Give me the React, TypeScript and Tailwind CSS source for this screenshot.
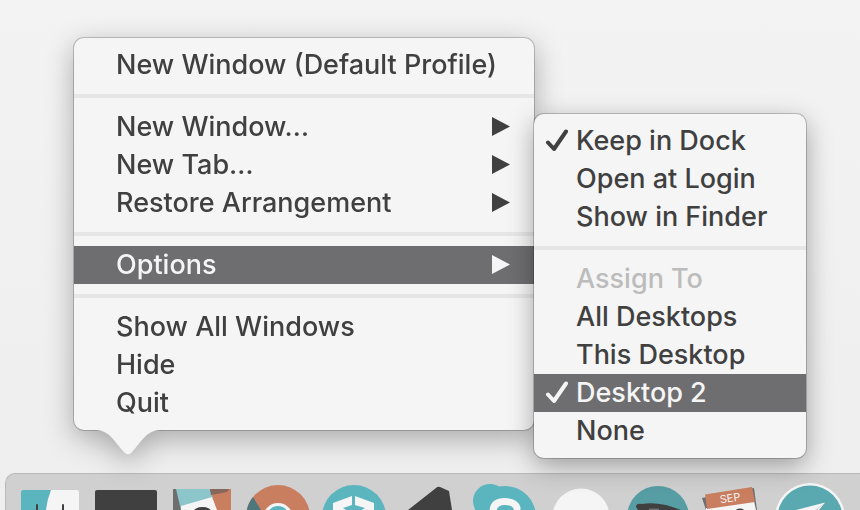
import type { ReactNode } from "react";

type Item = {
  label: string;
  submenu?: boolean;
  checked?: boolean;
  selected?: boolean;
  heading?: boolean;
};

const dockMenu: Item[][] = [
  [{ label: "New Window (Default Profile)" }],
  [
    { label: "New Window…", submenu: true },
    { label: "New Tab…", submenu: true },
    { label: "Restore Arrangement", submenu: true },
  ],
  [{ label: "Options", submenu: true, selected: true }],
  [{ label: "Show All Windows" }, { label: "Hide" }, { label: "Quit" }],
];

const optionsMenu: Item[][] = [
  [
    { label: "Keep in Dock", checked: true },
    { label: "Open at Login" },
    { label: "Show in Finder" },
  ],
  [
    { label: "Assign To", heading: true },
    { label: "All Desktops" },
    { label: "This Desktop" },
    { label: "Desktop 2", checked: true, selected: true },
    { label: "None" },
  ],
];

function Check() {
  return (
    <svg viewBox="0 0 24 24" className="h-6 w-6" fill="none" stroke="currentColor" strokeWidth="4" aria-hidden="true">
      <path d="M4 13.500 L10 20 L22 2.500" strokeLinecap="round" strokeLinejoin="round" />
    </svg>
  );
}

function Arrow() {
  return (
    <svg viewBox="0 0 18 20" className="h-5 w-[18px]" fill="currentColor" aria-hidden="true">
      <path d="M0 0 L18 9.500 L0 19 Z" />
    </svg>
  );
}

function MenuItem({ item }: { item: Item }) {
  const tone = item.selected
    ? "bg-[#6e6e70] text-[#f5f5f5]"
    : item.heading
      ? "text-[#bcbcbc]"
      : "text-[#404040]";
  return (
    <button
      type="button"
      role={item.checked ? "menuitemcheckbox" : "menuitem"}
      aria-checked={item.checked}
      aria-haspopup={item.submenu ? "menu" : undefined}
      disabled={item.heading}
      className={`flex h-[38px] w-full items-center whitespace-nowrap pr-6 text-left ${tone}`}
    >
      <span className="flex w-[42px] shrink-0 pl-[10px]">{item.checked && <Check />}</span>
      <span className="flex-1">{item.label}</span>
      {item.submenu && <Arrow />}
    </button>
  );
}

function Menu({ label, groups }: { label: string; groups: Item[][] }) {
  return (
    <div role="menu" aria-label={label} className="rounded-[10px] bg-[#f5f5f5] py-2 ring-1 ring-black/20">
      {groups.map((group, i) => (
        <div key={group[0].label} role="group">
          {i > 0 && <hr className="my-[10px] h-1 border-0 bg-[#e6e6e6]" />}
          {group.map((item) => (
            <MenuItem key={item.label} item={item} />
          ))}
        </div>
      ))}
    </div>
  );
}

const icons: { name: string; art: ReactNode }[] = [
  {
    name: "Finder",
    art: (
      <>
        <rect x="9" y="16" width="58" height="30" rx="2" fill="#f5f5f5" />
        <path d="M11 16 H39 Q35 26 34 36 H9 V18 Q9 16 11 16Z" fill="#5bb5bf" />
        <path d="M25 31 V36 M51 31 V36" stroke="#404040" strokeWidth="2" strokeLinecap="round" />
      </>
    ),
  },
  { name: "Terminal", art: <rect x="7" y="16" width="62" height="30" rx="2" fill="#404040" /> },
  {
    name: "Preview",
    art: (
      <>
        <path d="M9 15 H67 V36 H9Z" fill="#8cc5ca" />
        <path d="M9 15 H12 L17 36 H9Z" fill="#6e6e70" />
        <path d="M46 15 H67 V36 H52Z" fill="#c97e5f" />
        <path d="M46 15 H65 L63 18 L47 21Z" fill="#85675b" />
        <path d="M17 32 L48 23 L53 36 H17Z" fill="#f5f5f5" />
        <ellipse cx="38.5" cy="38" rx="9" ry="5" fill="#404040" />
      </>
    ),
  },
  {
    name: "Browser",
    art: (
      <>
        <circle cx="38" cy="43" r="32" fill="#c97e5f" />
        <path d="M13 23 L21 36 H7 Q8 29 13 23Z" fill="#4e777b" />
        <circle cx="38" cy="44" r="15" fill="#f5f5f5" />
        <circle cx="38" cy="43" r="11" fill="#5bb5bf" />
      </>
    ),
  },
  {
    name: "Packages",
    art: (
      <>
        <circle cx="38" cy="43" r="32" fill="#5bb5bf" />
        <path d="M17 29 L36 22 V31 L27 34 L30 36 H17Z M39 22 L58 29 V36 H46 L49 34 L39 31Z" fill="#f5f5f5" />
      </>
    ),
  },
  { name: "Editor", art: <path d="M16 36 L44 14 Q46 12 48 13 L57 17 L60 36Z" fill="#404040" /> },
  {
    name: "Chat",
    art: (
      <>
        <circle cx="22" cy="27" r="17" fill="#5bb5bf" />
        <circle cx="37" cy="43" r="31" fill="#5bb5bf" />
        <path d="M25 38 Q25 27.500 37 27.500 Q47 27.500 49 34" fill="none" stroke="#f5f5f5" strokeWidth="7" strokeLinecap="round" />
      </>
    ),
  },
  { name: "Messages", art: <circle cx="37" cy="43" r="28.500" fill="#f5f5f5" /> },
  {
    name: "Agent",
    art: (
      <>
        <circle cx="38" cy="43" r="31" fill="#579da4" />
        <path d="M16 33 Q16 29 22 30 Q32 28 46 31 Q56 34 61 36 H18Z" fill="#404040" />
        <path d="M29 35.500 H39" stroke="#6e6e70" strokeWidth="2" />
      </>
    ),
  },
  {
    name: "Calendar",
    art: (
      <>
        <path d="M6 24 L58 14 L61 36 H10Z" fill="#6e6e70" />
        <path d="M10 34 L58 27 L60 36 H10Z" fill="#f5f5f5" />
        <path d="M9 20.500 L56 13 L59 28 L11 35Z" fill="#c97e5f" />
        <ellipse cx="44" cy="38" rx="5" ry="3.500" fill="#404040" />
        <text x="34" y="28" transform="rotate(-9 34 24)" textAnchor="middle" fontSize="11" fill="#f5f5f5">SEP</text>
      </>
    ),
  },
  {
    name: "Telegram",
    art: (
      <>
        <circle cx="38" cy="44" r="35" fill="#f5f5f5" />
        <circle cx="38" cy="44" r="32.500" fill="#5aa8b0" />
        <path d="M24 36 L53 28.500 L47 36Z" fill="#f5f5f5" />
        <path d="M43 36 L53 28.500 L45 36Z" fill="#d2d2d2" />
      </>
    ),
  },
];

export default function App() {
  return (
    <main className="relative flex h-screen flex-col justify-end overflow-hidden bg-linear-to-b from-[#f3f3f3] to-[#eeeeee] font-['Inter','Liberation_Sans',sans-serif]">
      <nav aria-label="Dock" className="ml-[5px] flex h-[37px] overflow-hidden rounded-tl-[10px] border-l border-t border-[#b8baba] bg-[#d0d0d0] pl-[6px]">
        {icons.map((icon) => (
          <svg key={icon.name} viewBox="0 0 76 36" className="h-9 w-[76px] shrink-0" role="img" aria-label={icon.name}>
            {icon.art}
          </svg>
        ))}
      </nav>

      <div className="absolute left-[74px] top-[38px] w-[460px] text-[27px] font-medium leading-8">
        <div className="drop-shadow-[0_8px_14px_rgba(0,0,0,0.3)]">
          <Menu label="Dock menu" groups={dockMenu} />
          <svg viewBox="0 0 64 25" className="absolute left-[22px] top-full h-[25px] w-16" aria-hidden="true">
            <path d="M0 0 C14 1 17 10 28 22 Q32 26.500 36 22 C47 10 50 1 64 0Z" fill="#f5f5f5" />
          </svg>
        </div>
        <div className="absolute left-full top-[76px] w-[272px] rounded-[10px] shadow-[0_8px_26px_rgba(0,0,0,0.35)]">
          <Menu label="Options" groups={optionsMenu} />
        </div>
      </div>
    </main>
  );
}
